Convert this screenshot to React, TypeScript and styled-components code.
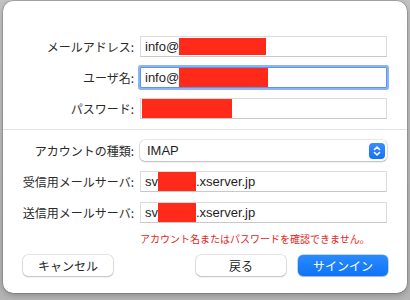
import React from "react";
import styled, { createGlobalStyle } from "styled-components";

const Global = createGlobalStyle`
  html, body { margin: 0; padding: 0; background: #bcbcbc; }
  body { width: 410px; height: 300px; overflow: hidden; font-family: "Liberation Sans", "Noto Sans CJK JP", sans-serif; }
`;

const Backdrop = styled.div`
  width: 410px;
  height: 300px;
  padding: 1px 3px 0 3px;
  box-sizing: border-box;
  background: linear-gradient(#c3c3c3, #b4b4b4);
`;

const Window = styled.div`
  width: 404px;
  height: 292px;
  background: #ffffff;
  border-radius: 10px;
  box-shadow: 0 0 0 0.5px rgba(0, 0, 0, 0.25), 0 2px 6px rgba(0, 0, 0, 0.25);
  display: flex;
  flex-direction: column;
  overflow: hidden;
`;

const Section = styled.div<{ $top: number }>`
  display: grid;
  grid-template-columns: 131px 247px;
  column-gap: 6px;
  row-gap: 10px;
  padding-top: ${(p) => p.$top}px;
  align-items: center;
`;

const Separator = styled.div`
  height: 1px;
  background: #e3e3e3;
  margin-top: 10px;
`;

const Label = styled.div`
  text-align: right;
  font-family: "Noto Sans CJK JP", sans-serif;
  font-size: 12px;
  color: #2b2b2b;
  line-height: 21px;
  white-space: nowrap;
`;

const Field = styled.div<{ $focused?: boolean }>`
  height: 21px;
  box-sizing: border-box;
  border: 1px solid #dcdcdc;
  border-bottom-color: #c8c8c8;
  background: #fff;
  display: flex;
  align-items: center;
  padding-left: 4px;
  font-family: "Liberation Sans", sans-serif;
  font-size: 13px;
  color: #1e1e1e;
  ${(p) =>
    p.$focused
      ? `border: 1px solid #5f94ea; box-shadow: 0 0 0 2px #8ab4f3; border-radius: 1px;`
      : ""}
`;

const Redact = styled.span<{ $w: number; $h?: number }>`
  display: inline-block;
  width: ${(p) => p.$w}px;
  height: ${(p) => p.$h ?? 17}px;
  background: #ff2a1a;
`;

const Popup = styled.div`
  height: 21px;
  box-sizing: border-box;
  border-radius: 5px;
  background: #fff;
  box-shadow: 0 0 0 0.5px rgba(0, 0, 0, 0.18), 0 1px 2px rgba(0, 0, 0, 0.2);
  display: flex;
  align-items: center;
  justify-content: space-between;
  padding: 0 2px 0 7px;
  font-family: "Liberation Sans", sans-serif;
  font-size: 13px;
  color: #1e1e1e;
`;

const Stepper = styled.div`
  width: 16px;
  height: 16px;
  border-radius: 4px;
  background: linear-gradient(#3a8dfd, #1574f5);
  display: flex;
  align-items: center;
  justify-content: center;
`;

const ErrorRow = styled.div`
  padding: 9px 0 0 137px;
  font-family: "Noto Sans CJK JP", sans-serif;
  font-size: 10px;
  line-height: 14px;
  color: #e3261c;
  white-space: nowrap;
`;

const Buttons = styled.div`
  display: flex;
  align-items: center;
  padding: 9px 19px 0 20px;
  gap: 12px;
`;

const Spacer = styled.div`
  flex: 1;
`;

const Button = styled.div<{ $primary?: boolean }>`
  width: 90px;
  height: 21px;
  border-radius: 5px;
  display: flex;
  align-items: center;
  justify-content: center;
  font-family: "Noto Sans CJK JP", sans-serif;
  font-size: 12px;
  color: ${(p) => (p.$primary ? "#ffffff" : "#262626")};
  background: ${(p) => (p.$primary ? "linear-gradient(#2a8bff, #0f73f4)" : "#fff")};
  box-shadow: ${(p) =>
    p.$primary
      ? "0 0 0 0.5px rgba(0,90,220,0.5), 0 1px 1px rgba(0,0,0,0.15)"
      : "0 0 0 0.5px rgba(0,0,0,0.2), 0 1px 2px rgba(0,0,0,0.18)"};
`;

export default function App() {
  return (
    <>
      <Global />
      <Backdrop>
        <Window>
          <Section $top={35}>
            <Label>メールアドレス:</Label>
            <Field>
              info@<Redact $w={87} />
            </Field>
            <Label>ユーザ名:</Label>
            <Field $focused>
              info@<Redact $w={89} $h={19} />
            </Field>
            <Label>パスワード:</Label>
            <Field style={{ paddingLeft: 1 }}>
              <Redact $w={90} $h={19} />
            </Field>
          </Section>
          <Separator />
          <Section $top={10}>
            <Label>アカウントの種類:</Label>
            <Popup>
              IMAP
              <Stepper>
                <svg width="8" height="12" viewBox="0 0 8 12">
                  <path d="M1.5 4.5 L4 2 L6.5 4.5 M1.5 7.5 L4 10 L6.5 7.5" stroke="#fff" strokeWidth="1.6" fill="none" strokeLinecap="round" strokeLinejoin="round" />
                </svg>
              </Stepper>
            </Popup>
            <Label>受信用メールサーバ:</Label>
            <Field>
              sv<Redact $w={38} $h={19} />.xserver.jp
            </Field>
            <Label>送信用メールサーバ:</Label>
            <Field>
              sv<Redact $w={38} $h={19} />.xserver.jp
            </Field>
          </Section>
          <ErrorRow>アカウント名またはパスワードを確認できません。</ErrorRow>
          <Buttons>
            <Button>キャンセル</Button>
            <Spacer />
            <Button>戻る</Button>
            <Button $primary>サインイン</Button>
          </Buttons>
        </Window>
      </Backdrop>
    </>
  );
}
